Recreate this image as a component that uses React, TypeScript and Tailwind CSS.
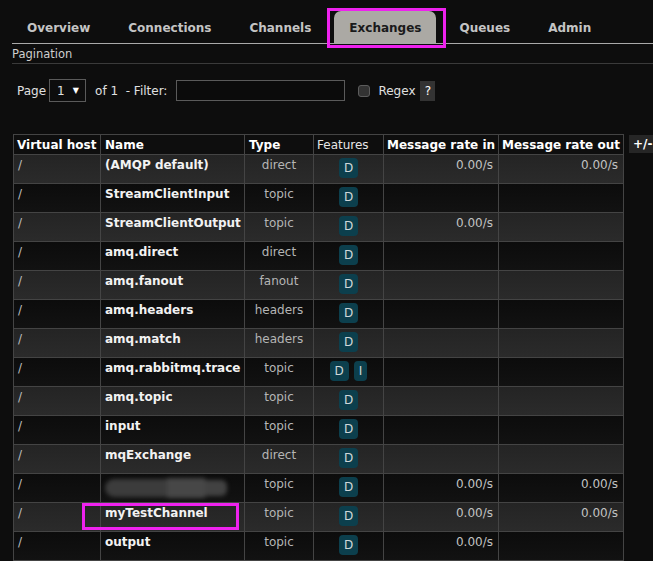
import React from "react";

type Row = {
  name: string;
  type: string;
  features: string[];
  rateIn?: string;
  rateOut?: string;
  blurred?: boolean;
  marked?: boolean;
};

const rows: Row[] = [
  { name: "(AMQP default)", type: "direct", features: ["D"], rateIn: "0.00/s", rateOut: "0.00/s" },
  { name: "StreamClientInput", type: "topic", features: ["D"] },
  { name: "StreamClientOutput", type: "topic", features: ["D"], rateIn: "0.00/s" },
  { name: "amq.direct", type: "direct", features: ["D"] },
  { name: "amq.fanout", type: "fanout", features: ["D"] },
  { name: "amq.headers", type: "headers", features: ["D"] },
  { name: "amq.match", type: "headers", features: ["D"] },
  { name: "amq.rabbitmq.trace", type: "topic", features: ["D", "I"] },
  { name: "amq.topic", type: "topic", features: ["D"] },
  { name: "input", type: "topic", features: ["D"] },
  { name: "mqExchange", type: "direct", features: ["D"] },
  { name: "", type: "topic", features: ["D"], rateIn: "0.00/s", rateOut: "0.00/s", blurred: true },
  { name: "myTestChannel", type: "topic", features: ["D"], rateIn: "0.00/s", rateOut: "0.00/s", marked: true },
  { name: "output", type: "topic", features: ["D"], rateIn: "0.00/s" },
];

const tabs = ["Overview", "Connections", "Channels", "Exchanges", "Queues", "Admin"];

export default function App() {
  return (
    <div className="w-[653px] h-[561px] overflow-hidden bg-[#0d0d0d] text-[#ddd] font-['DejaVu_Sans',sans-serif] text-[12px]">
      {/* Tabs */}
      <div className="pt-[11px] pl-[12px]">
        <div className="flex gap-[8px] border-b border-[#a9a9a9]">
          {tabs.map((t) =>
            t === "Exchanges" ? (
              <div key={t} className="relative">
                <div className="h-[32px] pt-[2px] px-[15px] flex items-center rounded-t-[7px] bg-[#aba9a4] text-[#1a1a1a] font-bold">
                  {t}
                </div>
                <div className="absolute -left-[7px] -right-[10px] -top-[3px] -bottom-[5px] border-[3px] border-[#ee22ee]" />
              </div>
            ) : (
              <div key={t} className="h-[32px] pt-[2px] px-[15px] flex items-center text-[#c4c4c4] font-bold">
                {t}
              </div>
            )
          )}
        </div>
      </div>

      {/* Pagination */}
      <div className="ml-[12px] h-[20px] pt-[3px] flex items-center text-[11.5px] text-[#cfcfcf] border-b border-[#3a3a3a]">
        Pagination
      </div>

      <div className="ml-[17px] mt-[15px] h-[23px] flex items-center text-[#e0e0e0]">
        <span>Page</span>
        <div className="ml-[3px] w-[37px] h-[23px] border border-[#5a5a5a] flex items-center pl-[7px] gap-[8px]">
          <span>1</span>
          <span className="text-[8px] text-white">▼</span>
        </div>
        <span className="ml-[9px] whitespace-pre">of 1  - Filter:</span>
        <div className="ml-[9px] w-[169px] h-[21px] border border-[#5a5a5a] bg-[#0b0b0b]" />
        <div className="ml-[13px] w-[12px] h-[12px] rounded-[3px] bg-[#333] border border-[#5c5c5c]" />
        <span className="ml-[8px]">Regex</span>
        <span className="ml-[5px] w-[15px] h-[20px] bg-[#333] flex items-center justify-center text-white">?</span>
      </div>

      {/* Table */}
      <div className="flex items-start mt-[32px] ml-[13px]">
        <table className="table-fixed border-collapse w-[610px]">
          <colgroup>
            <col className="w-[87px]" />
            <col className="w-[144px]" />
            <col className="w-[69px]" />
            <col className="w-[70px]" />
            <col className="w-[115px]" />
            <col className="w-[125px]" />
          </colgroup>
          <thead>
            <tr className="h-[20px] bg-[#0e0e0e] text-white">
              <th className="border border-[#444] text-left pl-[3px] font-bold leading-[16px]">Virtual host</th>
              <th className="border border-[#444] text-left pl-[4px] font-bold leading-[16px]">Name</th>
              <th className="border border-[#444] text-left pl-[4px] font-bold leading-[16px]">Type</th>
              <th className="border border-[#444] text-left pl-[3px] font-normal leading-[16px] text-[#e6e6e6]">Features</th>
              <th className="border border-[#444] text-left pl-[3px] font-bold leading-[16px]">Message rate in</th>
              <th className="border border-[#444] text-left pl-[3px] font-bold leading-[16px] whitespace-nowrap">Message rate out</th>
            </tr>
          </thead>
          <tbody>
            {rows.map((r, i) => (
              <tr
                key={i}
                className={`h-[29px] ${i % 2 === 0 ? "bg-gradient-to-b from-[#242424] to-[#2b2b2b]" : "bg-gradient-to-b from-[#0c0c0c] to-[#121212]"}`}
              >
                <td className="border border-[#444] align-top pt-[2px] pl-[4px] leading-[16px] text-[#bdbdbd]">/</td>
                <td className="relative border border-[#444] align-top pt-[2px] pl-[4px] leading-[16px] font-bold text-[#f2f2f2] whitespace-nowrap">
                  {r.blurred ? (
                    <div className="flex items-center h-[20px] mt-[2px] blur-[2px]">
                      <div className="w-[62px] h-[18px] rounded-l-[9px] bg-[#3c3c3c]" />
                      <div className="w-[38px] h-[20px] bg-[#474747]" />
                      <div className="w-[22px] h-[16px] rounded-r-[6px] bg-[#424242]" />
                    </div>
                  ) : (
                    r.name
                  )}
                  {r.marked && (
                    <div className="absolute -left-[19px] top-[0px] w-[157px] h-[27px] border-[3px] border-[#ee22ee]" />
                  )}
                </td>
                <td className="border border-[#444] align-top pt-[2px] text-center leading-[16px] text-[#b5b5b5]">{r.type}</td>
                <td className="border border-[#444] align-top pt-[3px] pb-[4px] text-center leading-[16px]">
                  <div className="flex justify-center gap-[5px]">
                    {r.features.map((f) => (
                      <span
                        key={f}
                        className="inline-block h-[20px] leading-[20px] px-[5px] rounded-[4px] bg-[#0c3f4d] text-[#cfd8da]"
                      >
                        {f}
                      </span>
                    ))}
                  </div>
                </td>
                <td className="border border-[#444] align-top pt-[2px] pr-[5px] text-right leading-[16px] text-[#c2c2c2]">{r.rateIn}</td>
                <td className="border border-[#444] align-top pt-[2px] pr-[5px] text-right leading-[16px] text-[#c2c2c2]">{r.rateOut}</td>
              </tr>
            ))}
          </tbody>
        </table>
        <div className="ml-[5px] mt-[1px] h-[18px] w-[30px] shrink-0 bg-[#262626] text-white font-bold pl-[4px] leading-[18px] whitespace-nowrap">
          +/-
        </div>
      </div>
    </div>
  );
}
